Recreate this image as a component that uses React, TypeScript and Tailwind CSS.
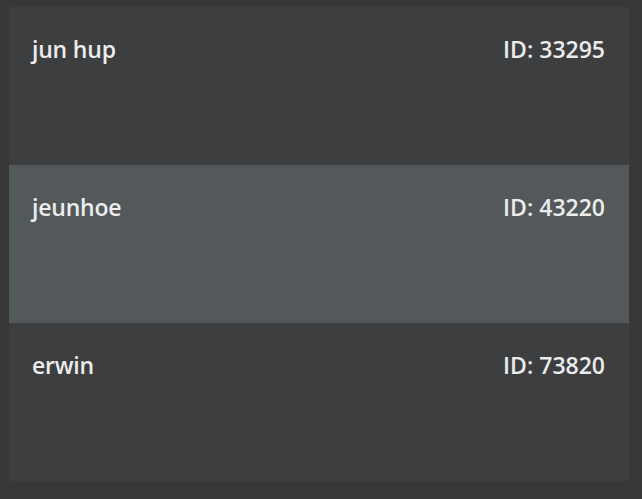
export default function App() {
  const rows = [
    { name: "jun hup", id: "33295", active: false },
    { name: "jeunhoe", id: "43220", active: true },
    { name: "erwin", id: "73820", active: false },
  ];
  return (
    <div className="w-[642px] h-[499px] bg-[#383838] pt-[7px] pl-[9px]" style={{ fontFamily: '"Open Sans", "Noto Sans", sans-serif' }}>
      <div className="w-[620px] flex flex-col bg-[#3d3e40]">
        {rows.map((r) => (
          <div
            key={r.id}
            className={`h-[158px] flex justify-between items-start pl-[23px] pr-[24px] pt-[26px] text-[23px] leading-[32px] font-semibold text-[#ececec] ${r.active ? "bg-[#53595b]" : ""}`}
          >
            <span className="tracking-[-0.2px]">{r.name}</span>
            <span>ID: {r.id}</span>
          </div>
        ))}
      </div>
    </div>
  );
}
